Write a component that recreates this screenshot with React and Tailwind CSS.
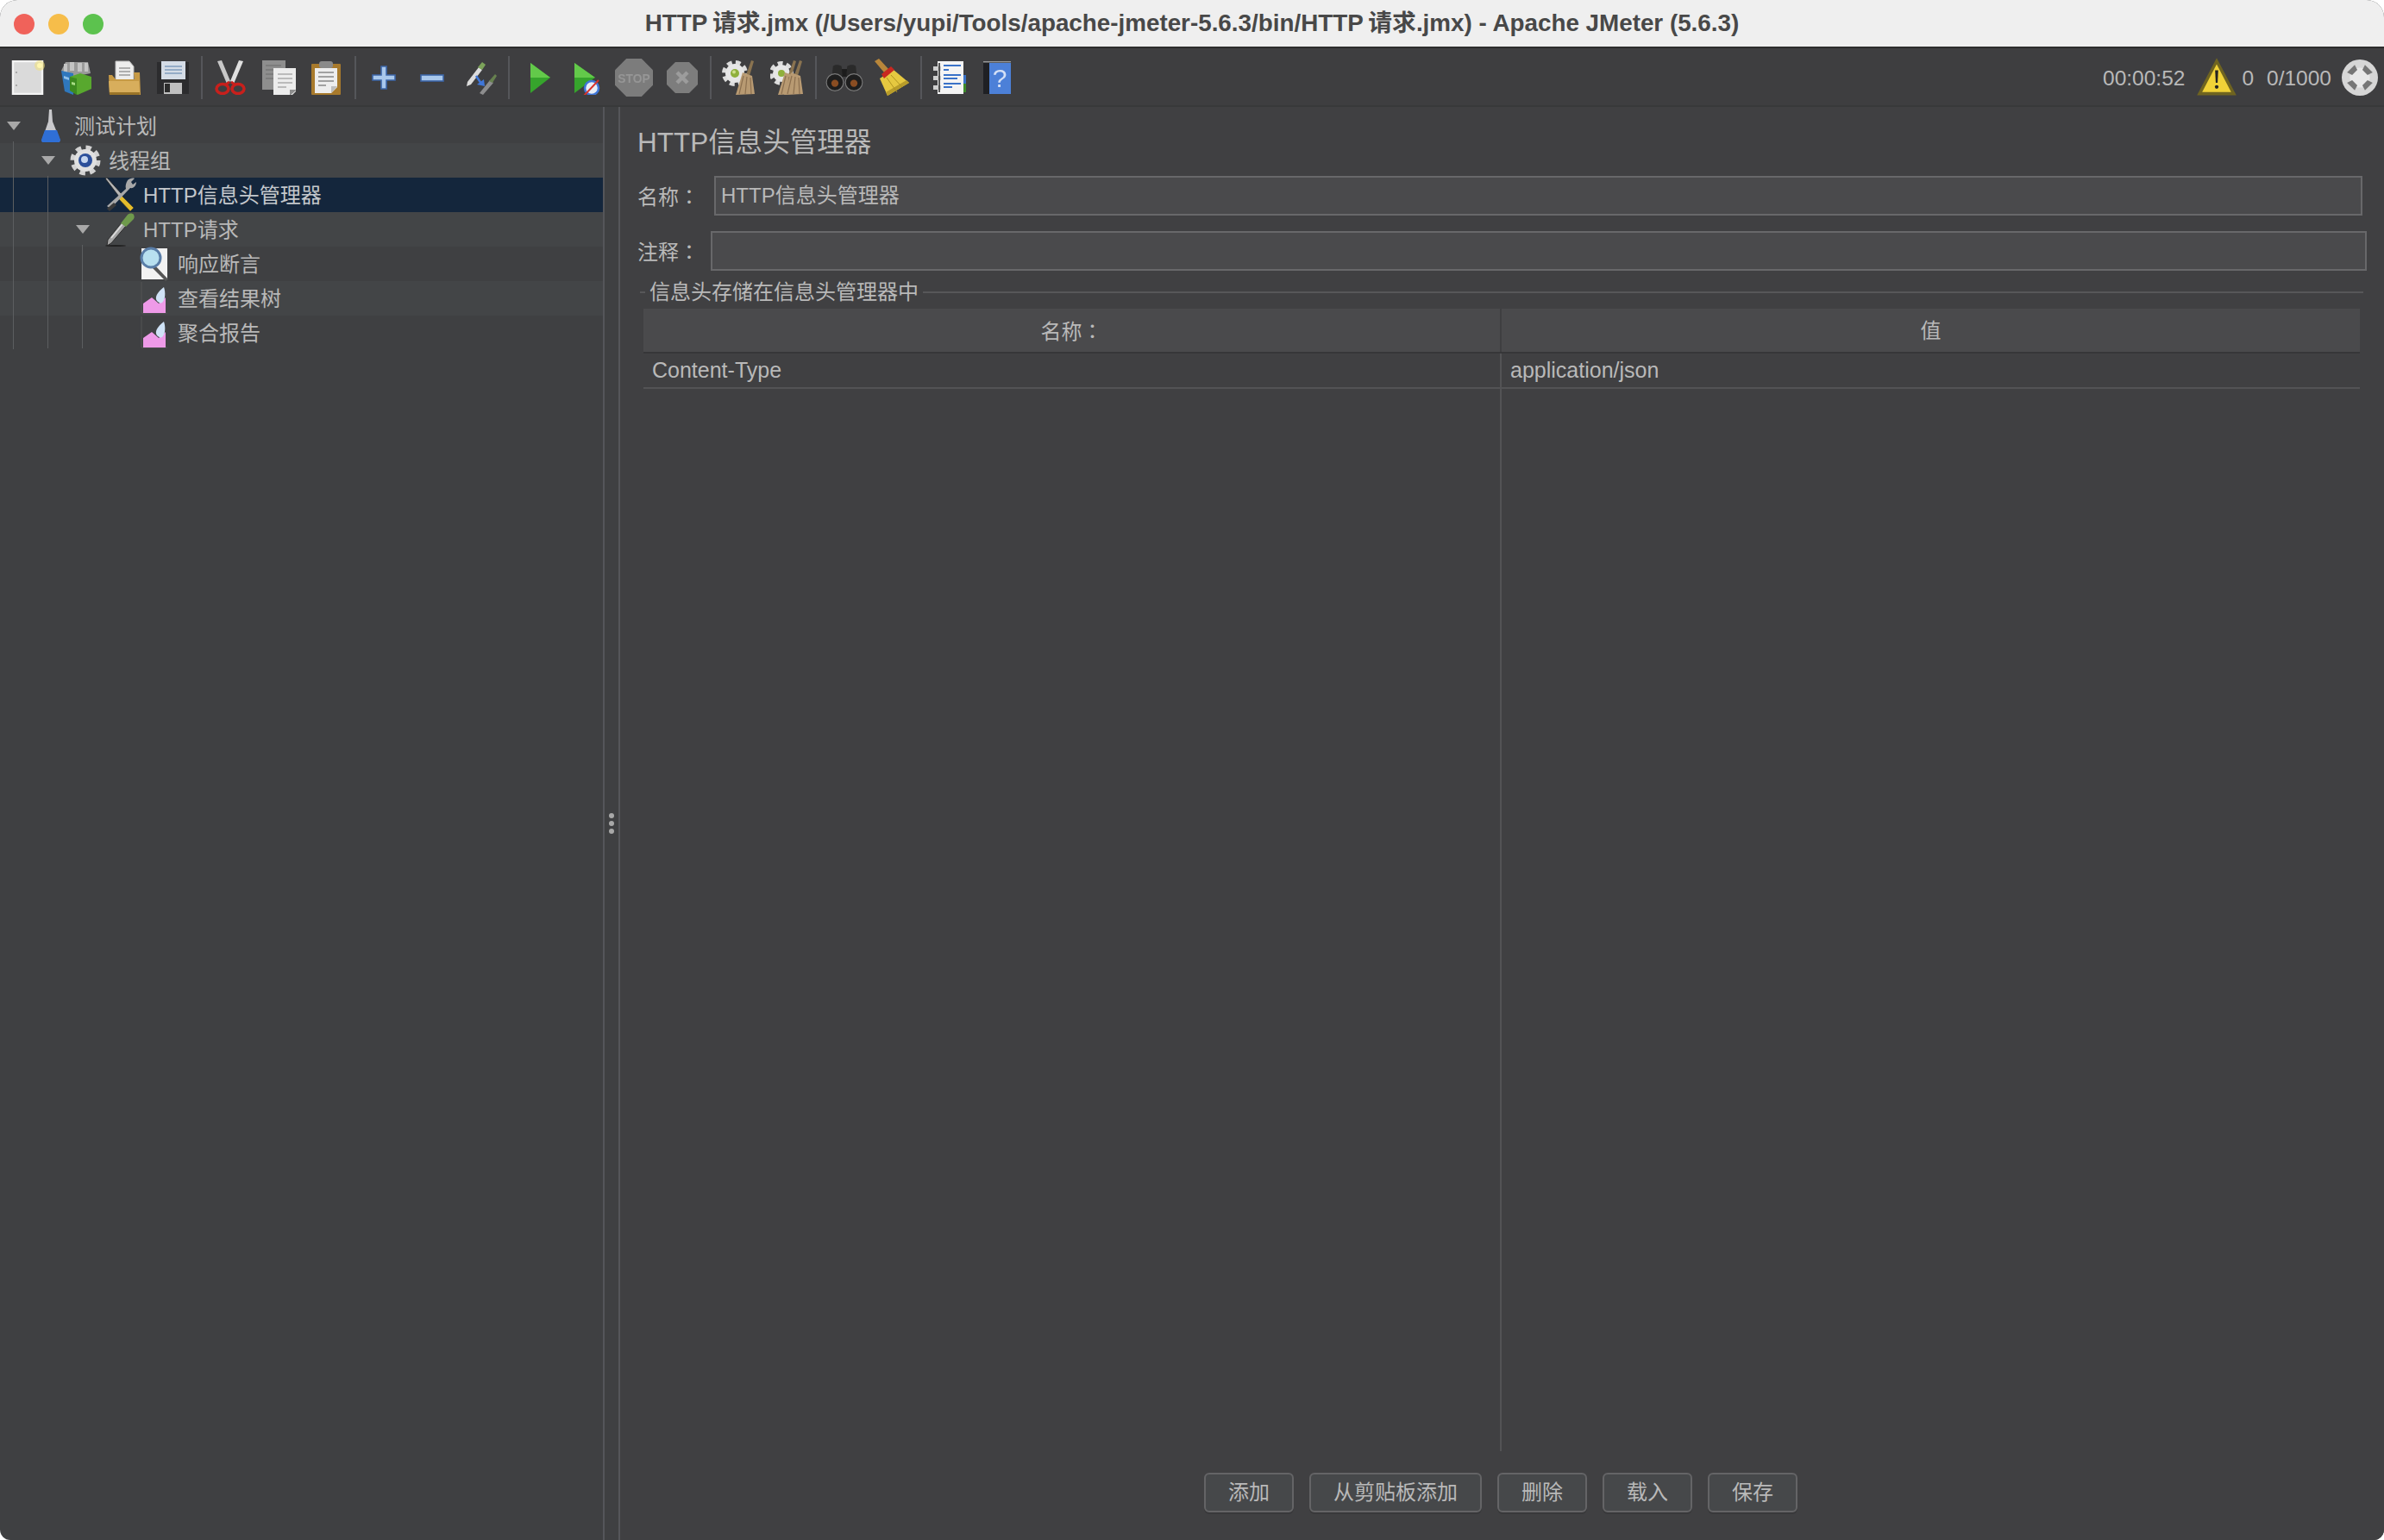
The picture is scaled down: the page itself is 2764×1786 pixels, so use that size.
import React from "react";

// toolbar icons, drawn on a 40x40 box unless vb says otherwise
const Svg = ({ children, size = 40, vb = 40, className = "" }) => (
  <svg width={size} height={size} viewBox={`0 0 ${vb} ${vb}`} className={`shrink-0 ${className}`}>
    {children}
  </svg>
);

const Broom = ({ x = 0 }) => (
  <g transform={`translate(${x} 0)`}>
    <path d="M34 0l3 1-5 17-4-1z" fill="#8a7350" />
    <path d="M24 14l11 4 3 21-22 1z" fill="#b89a72" />
    <path d="M25 18l-5 21M29 19l-2 20M33 20l1 19" stroke="#8c7050" strokeWidth="1.200" fill="none" />
  </g>
);

const Gear = ({ cx = 15, cy = 15, r = 11, mid = "#e6e6e6" }) => (
  <g>
    <circle cx={cx} cy={cy} r={r + 1} fill="none" stroke="#dcdcdc" strokeWidth="6" strokeDasharray="5.500 4" />
    <circle cx={cx} cy={cy} r={r} fill={mid} />
  </g>
);

const icons = {
  newFile: (
    <Svg>
      <rect x="2" y="1" width="34" height="38" fill="#dadada" stroke="#f4f4f4" strokeWidth="2.500" />
      <circle cx="6" cy="14" r="1" fill="#999" />
      <circle cx="6" cy="29" r="1" fill="#999" />
      <circle cx="33" cy="6" r="6" fill="#f2e27a" opacity="0.55" />
      <circle cx="33" cy="6" r="3" fill="#fff7b0" />
    </Svg>
  ),
  templates: (
    <Svg>
      <path d="M2 12l5-10h26l3 13-20 4z" fill="#9a9a9a" />
      <path d="M5 4h4v10H5zM12 2h5v10h-5zM21 3h5v10h-5zM29 3h4v10h-4z" fill="#c4c4c4" />
      <path d="M2 12l14 3v25l-10-4z" fill="#2f77bd" />
      <path d="M5 18l6 2v3l-6-2z" fill="#8fc0ea" />
      <path d="M12 19l12-4 13 4v14l-16 7-9-5z" fill="#58a82e" />
      <path d="M12 19l8 2v19l-8-5z" fill="#3d8a20" />
      <path d="M14 25l4 1v3l-4-1z" fill="#a8dc84" />
    </Svg>
  ),
  open: (
    <Svg>
      <path d="M9 1h16l5 6v19H9z" fill="#ededed" stroke="#bbb" />
      <path d="M13 9h13M13 13h13M13 17h13" stroke="#999" strokeWidth="1.500" />
      <path d="M1 17h4l4 5h22l-1-8h7l1 26H2z" fill="#c79a45" />
      <path d="M1 24h35l1 15H2z" fill="#d8ae5c" />
      <path d="M2 37h35v3H2z" fill="#9a7428" />
    </Svg>
  ),
  save: (
    <Svg>
      <path d="M1 2h37v37H1z" fill="#2c2c2e" />
      <rect x="6" y="1" width="28" height="21" fill="#d4dce6" />
      <path d="M10 7h20M10 11h20M10 15h20" stroke="#7f9cbd" strokeWidth="1.500" />
      <rect x="9" y="26" width="21" height="13" fill="#c0c0c0" />
      <rect x="10" y="27" width="6" height="10" fill="#2c2c2c" />
    </Svg>
  ),
  cut: (
    <Svg>
      <path d="M5 1l5-1 10 24-4 3z" fill="#c8c8c8" />
      <path d="M35 1l-5-1-10 24 4 3z" fill="#e0e0e0" />
      <ellipse cx="11" cy="33" rx="7" ry="5.500" fill="none" stroke="#c8201c" strokeWidth="3.500" />
      <ellipse cx="29" cy="33" rx="7" ry="5.500" fill="none" stroke="#c8201c" strokeWidth="3.500" />
      <path d="M15 28l4-3M25 28l-4-3" stroke="#c8201c" strokeWidth="3" />
    </Svg>
  ),
  copy: (
    <Svg>
      <rect x="1" y="0" width="27" height="34" fill="#8e8e8e" />
      <path d="M5 6h18M5 11h18M5 16h18M5 21h18" stroke="#777" strokeWidth="1.500" />
      <path d="M14 9h27v26l-6 6H14z" fill="#ececec" />
      <path d="M19 16h17M19 21h17M19 26h17M19 31h10" stroke="#aaa" strokeWidth="1.500" />
      <path d="M33 41v-7h8z" fill="#8e8e8e" />
    </Svg>
  ),
  paste: (
    <Svg>
      <rect x="2" y="4" width="34" height="36" rx="1" fill="#a87a2c" />
      <path d="M6 9h26v22l-7 7H6z" fill="#ededed" />
      <rect x="11" y="1" width="16" height="8" rx="3" fill="#8a8a8a" />
      <path d="M10 14h18M10 19h18M10 24h18M10 29h9" stroke="#888" strokeWidth="1.600" />
      <path d="M25 38v-8h7z" fill="#bdbdbd" />
    </Svg>
  ),
  plus: (
    <Svg>
      <path d="M17 7h6v10h10v6H23v10h-6V23H7v-6h10z" fill="#a9c8ec" stroke="#3c66a8" strokeWidth="1.600" />
    </Svg>
  ),
  minus: (
    <Svg>
      <rect x="7" y="17" width="26" height="7" fill="#a9c8ec" stroke="#3c66a8" strokeWidth="1.600" />
    </Svg>
  ),
  swap: (
    <Svg>
      <path d="M5 25l13-17 4 3L9 28l-5 2z" fill="#dcdcdc" />
      <path d="M17 8l5-6 4 3-4 6z" fill="#7ca35a" />
      <path d="M15 18l6 9" stroke="#3f76d8" strokeWidth="2.500" fill="none" />
      <path d="M16 28l9 2-1-8z" fill="#3f76d8" />
      <path d="M19 38l12-15 4 3-12 14z" fill="#a8a8a8" opacity="0.750" />
      <path d="M30 24l7-8 2 2-5 8z" fill="#66804f" />
    </Svg>
  ),
  play: (
    <Svg>
      <path d="M12 3l23 17-23 18z" fill="#36a42c" />
      <path d="M12 3l23 17H12z" fill="#63c94a" />
    </Svg>
  ),
  playNoTimer: (
    <Svg>
      <path d="M7 3l24 17L7 38z" fill="#36a42c" />
      <path d="M7 3l24 17H7z" fill="#63c94a" />
      <circle cx="27" cy="32" r="8" fill="#e8eef6" stroke="#3f76d8" strokeWidth="2.500" />
      <path d="M18 41l17-18" stroke="#d8342c" strokeWidth="2" />
    </Svg>
  ),
  stop: (
    <Svg size={44}>
      <path d="M12 0h16l12 12v16L28 40H12L0 28V12z" fill="#7c7c7c" />
      <text x="20" y="25" textAnchor="middle" fontSize="13" fontWeight="700" fill="#969696" fontFamily="Liberation Sans" textLength="34" lengthAdjust="spacingAndGlyphs">
        STOP
      </text>
    </Svg>
  ),
  shutdown: (
    <Svg>
      <path d="M12 2h16l10 10v16L28 38H12L2 28V12z" fill="#7d7d7d" />
      <path d="M14 14l12 12M26 14L14 26" stroke="#9c9c9c" strokeWidth="4.500" />
    </Svg>
  ),
  clear: (
    <Svg>
      <Gear />
      <circle cx="15" cy="15" r="5" fill="#8fb03c" />
      <circle cx="14" cy="13.500" r="2" fill="#cfe08c" />
      <Broom />
    </Svg>
  ),
  clearAll: (
    <Svg>
      <Gear cx={13} r={10} />
      <circle cx="13" cy="15" r="4" fill="#8fb03c" />
      <Broom x={-7} />
      <Broom />
    </Svg>
  ),
  search: (
    <Svg size={44}>
      <rect x="15" y="11" width="10" height="8" fill="#1c1c1c" />
      <path d="M8 8c1-2 7-2 9 0l1 10H7zM23 8c2-2 8-2 9 0l1 10H22z" fill="#2a2a2a" />
      <circle cx="10" cy="25" r="9" fill="#1e1e1e" stroke="#7a7a7a" strokeWidth="1" />
      <circle cx="30" cy="25" r="9" fill="#1e1e1e" stroke="#7a7a7a" strokeWidth="1" />
      <circle cx="10" cy="26" r="3.800" fill="#8a4d22" />
      <circle cx="30" cy="26" r="3.800" fill="#8a4d22" />
    </Svg>
  ),
  broom: (
    <Svg size={44} vb={44}>
      <path d="M1 3l5-3 11 12-5 4z" fill="#b8863a" />
      <path d="M7 23l9 20 25-15-18-15z" fill="#e6c840" />
      <path d="M16 43l25-15-3-3-24 14z" fill="#b89c2a" />
      <path d="M15 22l12 17M20 19l13 14" stroke="#b09420" strokeWidth="1" />
      <path d="M9 18l11-9 4 4-12 10z" fill="#c82820" />
    </Svg>
  ),
  notebook: (
    <Svg>
      <rect x="6" y="1" width="30" height="38" fill="#f4f4f4" />
      <rect x="36" y="17" width="3" height="10" fill="#3a72c8" />
      <rect x="36" y="27" width="3" height="10" fill="#3d8a2c" />
      <path d="M1 7h9v5H1zM1 18h9v5H1zM1 29h9v5H1z" fill="#cfcfcf" />
      <path d="M8 3v34" stroke="#222" strokeWidth="1.500" />
      <path d="M13 6h20M13 11h6M13 17h20M13 21h16M13 27h20M13 31h10" stroke="#3a72c8" strokeWidth="1.800" />
    </Svg>
  ),
  help: (
    <Svg>
      <rect x="3" y="1" width="32" height="38" fill="#1f2024" />
      <path d="M3 1h32v1.500H3z" fill="#9a9a9a" />
      <rect x="10" y="3" width="25" height="36" fill="#4c80d8" />
      <text x="22" y="31" textAnchor="middle" fontSize="30" fill="#d4e0f6" fontFamily="Liberation Sans">
        ?
      </text>
    </Svg>
  ),
  warning: (
    <Svg size={48}>
      <path d="M20 1l19 36H1z" fill="#6f6420" />
      <path d="M20 7l14 27H6z" fill="#f0d238" />
      <path d="M18.500 13h3l-.6 12h-1.800z" fill="#222" />
      <circle cx="20" cy="29" r="1.800" fill="#222" />
    </Svg>
  ),
  gui: (
    <Svg size={42}>
      <circle cx="20" cy="20" r="20" fill="#d6d6d6" />
      <circle cx="20" cy="20" r="11" fill="#e8e8e8" />
      <path d="M14 6h12l-2 6h-8zM14 34h12l-2-6h-8zM6 14l6 2v8l-6 2zM34 14l-6 2v8l6 2z" fill="#767676" transform="rotate(45 20 20)" />
    </Svg>
  ),
};

const treeIcons = {
  flask: (
    <svg width="24" height="38" viewBox="0 0 24 38" className="shrink-0">
      <path d="M10 0h3l1 14 8 20c1 2 0 4-2 4H4c-2 0-3-2-2-4l7-20z" fill="#c9c9cc" />
      <path d="M5 24h14l4 11c0 2-1 3-2 3H3c-2 0-2-2-2-3z" fill="#2f6fd6" />
    </svg>
  ),
  gear: (
    <svg width="38" height="40" viewBox="0 0 38 40" className="shrink-0">
      <circle cx="19" cy="20" r="14" fill="none" stroke="#d2d2d2" strokeWidth="7" strokeDasharray="6 5" />
      <circle cx="19" cy="20" r="13" fill="#e0e0e0" />
      <circle cx="19" cy="20" r="8" fill="#2c4f9a" />
      <circle cx="18" cy="19" r="4" fill="#c6d6ef" />
    </svg>
  ),
  tools: (
    <svg width="38" height="40" viewBox="0 0 38 40" className="shrink-0">
      <path d="M2 1l2-1 17 19-3 3z" fill="#b4b4b4" stroke="#222" strokeWidth="0.800" />
      <path d="M20 20l15 15-4 4L17 24z" fill="#e4bc2c" stroke="#3a3a20" strokeWidth="0.600" />
      <path d="M28 3c2-2 6-3 8-2l-4 4 2 3 4-3c0 4-3 8-7 7L8 36l-4-3 22-20c-1-3 0-7 2-10z" fill="#a8a8a8" />
      <path d="M12 29l-8 7 3 3 8-7z" fill="#3a3a3a" />
    </svg>
  ),
  dropper: (
    <svg width="38" height="40" viewBox="0 0 38 40" className="shrink-0">
      <path d="M5 32l16-20 5 4L9 36l-5 3z" fill="#a4a4a4" stroke="#2c2c2c" strokeWidth="1" />
      <path d="M9 30l13-16" stroke="#e0e0e0" strokeWidth="1.500" />
      <path d="M20 13l8-10c2-2 6-2 7 0s1 4-1 6l-8 8z" fill="#6f9a4c" />
      <ellipse cx="14" cy="39" rx="12" ry="1" fill="#222" />
    </svg>
  ),
  magnifier: (
    <svg width="38" height="40" viewBox="0 0 38 40" className="shrink-0">
      <rect x="4" y="2" width="30" height="36" fill="#f2f2f2" />
      <path d="M18 20l17 18-3 2-17-17z" fill="#555" />
      <circle cx="15" cy="13" r="11" fill="#b8e0f0" stroke="#5a7ea8" strokeWidth="3" />
    </svg>
  ),
  chart: (
    <svg width="32" height="38" viewBox="0 0 32 38" className="shrink-0">
      <path d="M1 0v36h30" fill="none" stroke="#555" strokeWidth="1" />
      <path d="M3 36V25l10-7 8 7 8-7v18z" fill="#ee9ae8" />
      <path d="M19 22c-3-4 0-10 8-16 2 6 2 14-2 18-2 1-4 0-6-2z" fill="#cfe2f6" />
    </svg>
  ),
};

const toolbarGroups = [
  ["newFile", "templates", "open", "save"],
  ["cut", "copy", "paste"],
  ["plus", "minus", "swap"],
  ["play", "playNoTimer", "stop", "shutdown"],
  ["clear", "clearAll"],
  ["search", "broom"],
  ["notebook", "help"],
];

const treeRows = [
  { depth: 0, arrow: true, icon: "flask", label: "测试计划" },
  { depth: 1, arrow: true, icon: "gear", label: "线程组", striped: true },
  { depth: 2, icon: "tools", label: "HTTP信息头管理器", selected: true },
  { depth: 2, arrow: true, icon: "dropper", label: "HTTP请求", striped: true },
  { depth: 3, icon: "magnifier", label: "响应断言" },
  { depth: 3, icon: "chart", label: "查看结果树", striped: true },
  { depth: 3, icon: "chart", label: "聚合报告" },
];

const depthPad = ["pl-0", "pl-[40px]", "pl-[80px]", "pl-[120px]"];

const TreeRow = ({ row }) => (
  <div
    className={`flex h-[40px] items-center ${depthPad[row.depth]} ${
      row.selected ? "bg-[#14263c] text-[#c4c8cc]" : row.striped ? "bg-[#434547]" : ""
    }`}
  >
    <div className="flex w-[40px] shrink-0 justify-center pr-[9px]">
      {row.arrow && (
        <div className="h-0 w-0 border-x-[8px] border-t-[10px] border-x-transparent border-t-[#a8a8a8]" />
      )}
    </div>
    <div className="flex w-[38px] shrink-0 justify-center">{treeIcons[row.icon]}</div>
    <span className="ml-[8px] pt-[2px]">{row.label}</span>
  </div>
);

// the colon sits centred in its cell, which the TC font does
const Label = ({ text }) => (
  <>
    {text}
    <span className="font-['Noto_Sans_CJK_TC',sans-serif]">：</span>
  </>
);

const Field = ({ label, labelWidth, right, value, className = "" }) => (
  <div className={`flex h-[46px] items-center pl-[20px] ${className}`}>
    <span className={`${labelWidth} shrink-0 pt-[1px]`}>
      <Label text={label} />
    </span>
    <div className={`flex h-[46px] flex-1 items-center border-2 border-[#68686a] bg-[#4a4a4c] pl-[6px] ${right}`}>
      {value}
    </div>
  </div>
);

export default function App() {
  return (
    <div className="flex h-[1786px] w-[2764px] flex-col overflow-hidden rounded-t-[20px] rounded-b-[12px] bg-[#3f4042] font-['Liberation_Sans','Noto_Sans_CJK_SC',sans-serif] text-[24px] leading-none text-[#b9b9b9]">
      {/* title bar */}
      <div className="relative flex h-[56px] shrink-0 items-center justify-center border-b-2 border-[#2c2c2c] bg-[#efefef]">
        <div className="absolute left-[16px] top-[16px] flex gap-[16px]">
          <div className="h-[24px] w-[24px] rounded-full bg-[#f0625a]" />
          <div className="h-[24px] w-[24px] rounded-full bg-[#f6bd4a]" />
          <div className="h-[24px] w-[24px] rounded-full bg-[#5cc24e]" />
        </div>
        <span className="text-[27.800px] font-bold text-[#484848]">
          HTTP{"\u2009"}请求.jmx (/Users/yupi/Tools/apache-jmeter-5.6.3/bin/HTTP{"\u2009"}请求.jmx) - Apache JMeter (5.6.3)
        </span>
      </div>

      {/* toolbar */}
      <div className="flex h-[68px] shrink-0 items-center border-b-2 border-[#38393a] bg-[#3e3e40] pl-[13px] pr-[7px] pt-[2px]">
        {toolbarGroups.map((group, i) => (
          <React.Fragment key={i}>
            {i > 0 && <div className="mx-[12px] h-[50px] w-[2px] bg-[#55565a]" />}
            <div className="flex items-center gap-[16px]">
              {group.map((name) => (
                <div key={name} className="flex h-[40px] w-[40px] items-center justify-center blur-[0.5px]">
                  {icons[name]}
                </div>
              ))}
            </div>
          </React.Fragment>
        ))}
        <div className="ml-auto flex items-center text-[24.500px]">
          <span className="pt-[2px]">00:00:52</span>
          <div className="ml-[13px] blur-[0.4px]">{icons.warning}</div>
          <span className="ml-[5px] pt-[2px]">0</span>
          <span className="ml-[15px] pt-[2px]">0/1000</span>
          <div className="ml-[12px] blur-[0.5px]">{icons.gui}</div>
        </div>
      </div>

      <div className="flex min-h-0 flex-1">
        {/* tree */}
        <div className="relative w-[699px] shrink-0 pt-[2px]">
          <div className="absolute left-[15px] top-[40px] h-[241px] w-[1px] bg-[#5c5e60]" />
          <div className="absolute left-[55px] top-[80px] h-[200px] w-[1px] bg-[#5c5e60]" />
          <div className="absolute left-[95px] top-[160px] h-[120px] w-[1px] bg-[#5c5e60]" />
          {treeRows.map((row) => (
            <TreeRow key={row.label} row={row} />
          ))}
        </div>

        {/* splitter */}
        <div className="flex w-[20px] shrink-0 flex-col items-center justify-center gap-[3px] border-x-2 border-[#55565a]">
          <div className="h-[6px] w-[6px] rounded-full bg-[#a8a8a8]" />
          <div className="h-[6px] w-[6px] rounded-full bg-[#a8a8a8]" />
          <div className="h-[6px] w-[6px] rounded-full bg-[#a8a8a8]" />
        </div>

        {/* header manager form */}
        <div className="flex min-w-0 flex-1 flex-col bg-[#404042]">
          <div className="flex h-[80px] shrink-0 items-center pl-[20px] pt-[3px] text-[31.500px]">HTTP信息头管理器</div>
          <Field label="名称" labelWidth="w-[89px]" right="mr-[25px]" value="HTTP信息头管理器" />
          <Field label="注释" labelWidth="w-[85px]" right="mr-[20px]" className="mt-[18px]" />

          <div className="mt-[13px] flex h-[24px] shrink-0 items-center pl-[23px] pr-[24px]">
            <div className="h-[2px] w-[6px] bg-[#575759]" />
            <span className="mx-[5px]">信息头存储在信息头管理器中</span>
            <div className="h-[2px] flex-1 bg-[#575759]" />
          </div>

          <div className="ml-[27px] mr-[28px] mt-[7px] flex min-h-0 flex-1 flex-col">
            <div className="grid h-[52px] shrink-0 grid-cols-[995px_1fr] border-b-2 border-[#363638] bg-[#4a4a4c]">
              <div className="flex items-center justify-center border-r-2 border-[#3f3f41] pt-[2px]">
                <span>
                  <Label text="名称" />
                </span>
              </div>
              <div className="flex items-center justify-center pt-[2px]">值</div>
            </div>
            <div className="grid min-h-0 flex-1 grid-cols-[995px_1fr] text-[25px]">
              <div className="border-r-2 border-[#535355]">
                <div className="flex h-[41px] items-center border-b-2 border-[#535355] pl-[10px]">Content-Type</div>
              </div>
              <div>
                <div className="flex h-[41px] items-center border-b-2 border-[#535355] pl-[10px]">application/json</div>
              </div>
            </div>
          </div>

          <div className="flex h-[103px] shrink-0 items-start justify-center gap-[18px] pr-[3px] pt-[25px]">
            {["添加", "从剪贴板添加", "删除", "载入", "保存"].map((label) => (
              <button
                key={label}
                className="h-[46px] rounded-[6px] border-2 border-[#646466] bg-[#46484a] px-[26px] text-[#b9b9b9] shadow-[0_2px_0_#38383a]"
              >
                {label}
              </button>
            ))}
          </div>
        </div>
      </div>
    </div>
  );
}
